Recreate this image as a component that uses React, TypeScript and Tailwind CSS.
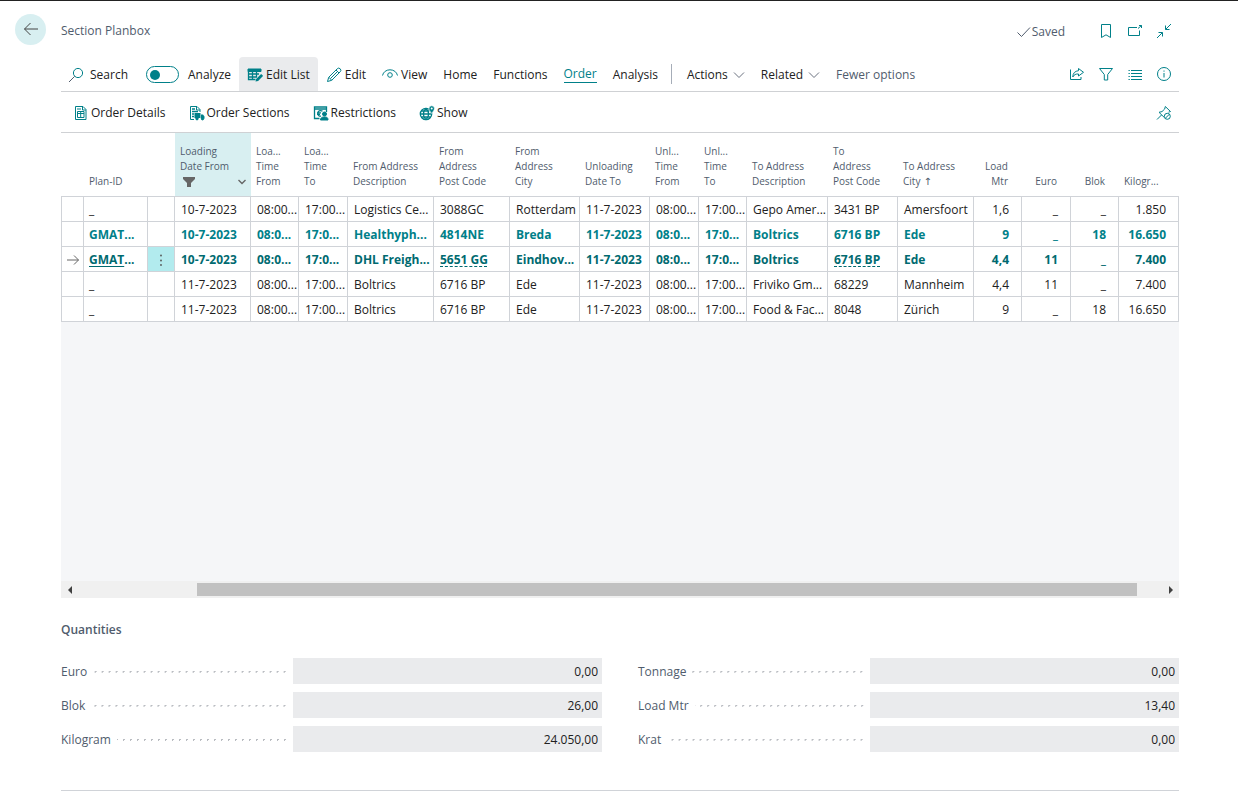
import type { ReactNode } from "react";

type IconProps = { children: ReactNode; className?: string };

function Icon({ children, className = "text-[#008089]" }: IconProps) {
	return (
		<svg
			viewBox="0 0 16 16"
			width="16"
			height="16"
			fill="none"
			stroke="currentColor"
			strokeWidth="1"
			aria-hidden="true"
			className={`shrink-0 ${className}`}
		>
			{children}
		</svg>
	);
}

const icons = {
	search: (
		<Icon>
			<circle cx="10" cy="6" r="4.6" />
			<path d="M6.7 9.3 1 15" stroke="#505c6d" />
		</Icon>
	),
	editList: (
		<Icon>
			<path d="M1 2h13v2.5H1z" fill="currentColor" />
			<path d="M1.5 4v8.5h7M1 7h11M1 10h9M5.5 4v8.5M9.5 4v6" strokeWidth="1.3" />
			<path d="m8.5 14.5.6-2.6 5-5 2 2-5 5z" fill="currentColor" stroke="none" />
		</Icon>
	),
	edit: (
		<Icon>
			<path d="M1.5 14.5 2.7 10.3 11.2 1.8a1.9 1.9 0 0 1 3 3L5.7 13.3zM10 3l3 3M3 10.3l2.7 3M4.5 11.5l7-7" />
		</Icon>
	),
	view: (
		<Icon>
			<path d="M.5 8.500C1.300 5 4.200 2.800 8 2.800S14.700 5 15.500 8.500" />
			<circle cx="8" cy="8" r="2.300" />
		</Icon>
	),
	share: (
		<Icon>
			<path d="M1.500 3.500v10h10.500v-2.500" />
			<path d="M9.500 2.500 14.500 6.300 9.500 10V8C6.800 7.800 5 8.700 3.800 11c0-3.800 2.200-6 5.700-6.300z" />
		</Icon>
	),
	filter: (
		<Icon>
			<path d="M1.500 2.500h13L9.700 8.500v5.500H6.300V8.500z" />
		</Icon>
	),
	list: (
		<Icon>
			<path d="M4 4.500h11M4 7.500h11M4 10.500h11M4 13.500h11M1.500 4.500h1.300M1.500 7.500h1.300M1.500 10.500h1.300M1.500 13.500h1.300" />
		</Icon>
	),
	info: (
		<Icon>
			<circle cx="8" cy="8" r="6.500" />
			<path d="M8 7v4.500M8 4.500v1.200" />
		</Icon>
	),
	pin: (
		<Icon>
			<path d="M9.300 1.500 14.500 6.500 12.500 7.200M9.300 1.500 8.700 4 6 6.600 3 7.300 8 12.200M5.500 10 1 14.500" />
			<circle cx="11.300" cy="11.300" r="3" />
			<path d="m9.300 13.300 4-4" />
		</Icon>
	),
	bookmark: (
		<Icon>
			<path d="M3.500 1.500h9v13L8 11.800 3.500 14.500z" />
		</Icon>
	),
	popout: (
		<Icon>
			<path d="M10 4.500H1.500v8h11V7.500M11 5.500l3.500-3M12 2.500h2.500V5" />
		</Icon>
	),
	collapse: (
		<Icon>
			<path d="M15 1 9.700 6.300M9.500 2.500v4h4M1 15l5.300-5.300M2.500 9.500h4v4" />
		</Icon>
	),
	orderDetails: (
		<Icon>
			<path d="M2.500 1.500h7.500l3 3v10H2.500zM9.500 1.500V5H13" />
			<path d="M4.500 6.500h6.500v6H4.500zM4.500 8.500h6.500M7.700 6.500v6M4 4h4" />
		</Icon>
	),
	orderSections: (
		<Icon>
			<path d="M5 14.500H1.500v-13H8l3 3V7M7.500 1.500V5H11" />
			<path d="M3 4h3M3 6.500h6M3 9h2M3 11.500h2" strokeWidth="1.300" />
			<path d="M5.500 8h6v5h-6zM12 9.500h2l1.500 2v2H12z" fill="currentColor" stroke="none" />
			<circle cx="8" cy="13.700" r="1.200" fill="currentColor" />
			<circle cx="13.500" cy="13.700" r="1.200" fill="currentColor" />
		</Icon>
	),
	restrictions: (
		<Icon>
			<path d="M6.500 13.500H1.500V2h12v5M1.500 4h12" strokeWidth="1.300" />
			<path d="M9.500 6.200C7 5 4.800 6 4.800 8.300s1.700 3.200 3.200 2.800M4 7.800h4M4 9.300h3" strokeWidth="1.300" />
			<circle cx="11.500" cy="9" r="2" fill="currentColor" />
			<path d="M7.500 15c.2-2.300 1.300-3 4-3s3.500.7 3.500 3z" fill="currentColor" />
		</Icon>
	),
	show: (
		<Icon>
			<circle cx="7" cy="9" r="5.700" strokeWidth="1.300" />
			<path d="M1.300 9h11.400M2.300 6h8M2.300 12h9.400M7 3.300c-3.500 3.400-3.500 8 0 11.400M7 3.300c3.500 3.400 3.500 8 0 11.400" strokeWidth="1.300" />
			<path d="M12.700 8.500c-1.700-2.500-2.700-3.500-2.700-5a2.700 2.700 0 0 1 5.400 0c0 1.500-1 2.500-2.700 5z" fill="currentColor" stroke="white" strokeWidth=".6" />
			<circle cx="12.700" cy="3.500" r="1" fill="white" stroke="none" />
		</Icon>
	),
	chevron: (
		<svg viewBox="0 0 12 12" width="12" height="12" fill="none" stroke="#6b7280" aria-hidden="true">
			<path d="m1 3.500 5 5 5-5" />
		</svg>
	),
};

const pageActions = [
	{ label: "Bookmark", icon: icons.bookmark },
	{ label: "Open in new window", icon: icons.popout },
	{ label: "Collapse", icon: icons.collapse },
];

const listActions = [
	{ label: "Share", icon: icons.share },
	{ label: "Filter", icon: icons.filter },
	{ label: "List layout", icon: icons.list },
	{ label: "Information", icon: icons.info },
];

const orderActions = [
	{ label: "Order Details", icon: icons.orderDetails },
	{ label: "Order Sections", icon: icons.orderSections },
	{ label: "Restrictions", icon: icons.restrictions },
	{ label: "Show", icon: icons.show },
];

const columns = [
	{ lines: [], width: "w-[23px]" },
	{ lines: ["Plan-ID"], width: "w-[64px]" },
	{ lines: [], width: "w-[27px]" },
	{ lines: ["Loading", "Date From"], width: "w-[76px]", filtered: true },
	{ lines: ["Loa...", "Time", "From"], width: "w-[48px]" },
	{ lines: ["Loa...", "Time", "To"], width: "w-[49px]" },
	{ lines: ["From Address", "Description"], width: "w-[86px]" },
	{ lines: ["From", "Address", "Post Code"], width: "w-[76px]" },
	{ lines: ["From", "Address", "City"], width: "w-[70px]" },
	{ lines: ["Unloading", "Date To"], width: "w-[70px]" },
	{ lines: ["Unl...", "Time", "From"], width: "w-[49px]" },
	{ lines: ["Unl...", "Time", "To"], width: "w-[48px]" },
	{ lines: ["To Address", "Description"], width: "w-[81px]" },
	{ lines: ["To", "Address", "Post Code"], width: "w-[70px]" },
	{ lines: ["To Address", "City"], width: "w-[76px]", sorted: true },
	{ lines: ["Load", "Mtr"], width: "w-[48px]", numeric: true },
	{ lines: ["Euro"], width: "w-[49px]", numeric: true },
	{ lines: ["Blok"], width: "w-[48px]", numeric: true },
	{ lines: ["Kilogr..."], width: "w-[60px]" },
];

const rows = [
	{
		id: 1,
		plan: "_",
		cells: ["10-7-2023", "08:00...", "17:00...", "Logistics Ce...", "3088GC", "Rotterdam", "11-7-2023", "08:00...", "17:00...", "Gepo Amer...", "3431 BP", "Amersfoort", "1,6", "_", "_", "1.850"],
	},
	{
		id: 2,
		plan: "GMAT...",
		planned: true,
		cells: ["10-7-2023", "08:0...", "17:0...", "Healthyph...", "4814NE", "Breda", "11-7-2023", "08:0...", "17:0...", "Boltrics", "6716 BP", "Ede", "9", "_", "18", "16.650"],
	},
	{
		id: 3,
		plan: "GMAT...",
		planned: true,
		selected: true,
		cells: ["10-7-2023", "08:0...", "17:0...", "DHL Freigh...", "5651 GG", "Eindhov...", "11-7-2023", "08:0...", "17:0...", "Boltrics", "6716 BP", "Ede", "4,4", "11", "_", "7.400"],
	},
	{
		id: 4,
		plan: "_",
		cells: ["11-7-2023", "08:00...", "17:00...", "Boltrics", "6716 BP", "Ede", "11-7-2023", "08:00...", "17:00...", "Friviko Gm...", "68229", "Mannheim", "4,4", "11", "_", "7.400"],
	},
	{
		id: 5,
		plan: "_",
		cells: ["11-7-2023", "08:00...", "17:00...", "Boltrics", "6716 BP", "Ede", "11-7-2023", "08:00...", "17:00...", "Food & Fac...", "8048", "Zürich", "9", "_", "18", "16.650"],
	},
];

const quantities = [
	{ id: "euro", label: "Euro", value: "0,00" },
	{ id: "tonnage", label: "Tonnage", value: "0,00" },
	{ id: "blok", label: "Blok", value: "26,00" },
	{ id: "load-mtr", label: "Load Mtr", value: "13,40" },
	{ id: "kilogram", label: "Kilogram", value: "24.050,00" },
	{ id: "krat", label: "Krat", value: "0,00" },
];

function IconButtons({ items }: { items: { label: string; icon: ReactNode }[] }) {
	return (
		<div className="flex pr-px">
			{items.map((item) => (
				<button key={item.label} type="button" aria-label={item.label} className="flex h-8 w-[29px] items-center justify-center">
					{item.icon}
				</button>
			))}
		</div>
	);
}

function Tab({ children, className = "" }: { children: ReactNode; className?: string }) {
	return (
		<button type="button" className={`flex h-full items-center gap-[3px] px-2 pt-px ${className}`}>
			{children}
		</button>
	);
}

function Toolbar() {
	return (
		<div className="flex h-[35px] items-center justify-between border-b border-[#cfd1d4]">
			<div className="flex h-full items-center whitespace-nowrap">
				<button type="button" className="flex h-full items-center gap-[6px] pl-[7px] pr-[18px] pt-px">
					{icons.search}
					Search
				</button>
				<label className="flex h-full items-center gap-[9px] pr-2 pt-px">
					<input type="checkbox" role="switch" className="sr-only" />
					<span className="flex h-[17px] w-[33px] items-center rounded-full border border-[#008089] px-[3px]">
						<span className="size-[10px] rounded-full bg-[#008089]" />
					</span>
					Analyze
				</label>
				<Tab className="rounded-t-sm bg-[#eaebed]">{icons.editList}Edit List</Tab>
				<Tab>{icons.edit}Edit</Tab>
				<Tab>{icons.view}View</Tab>
				<Tab>Home</Tab>
				<Tab>Functions</Tab>
				<Tab className="text-[#008089]">
					<span className="border-b border-[#008089] leading-4">Order</span>
				</Tab>
				<Tab>Analysis</Tab>
				<span className="ml-[5px] mr-[7px] h-5 w-px bg-[#a6adb8]" />
				<Tab className="gap-[5px]">Actions{icons.chevron}</Tab>
				<Tab className="gap-[5px]">Related{icons.chevron}</Tab>
				<Tab className="text-[#505c6d]">Fewer options</Tab>
			</div>
			<IconButtons items={listActions} />
		</div>
	);
}

function PlanTable() {
	return (
		<table className="w-full table-fixed border-separate border-spacing-0 whitespace-nowrap">
			<thead>
				<tr className="h-[64px] text-[10px] leading-[15px] text-[#505c6d]">
					{columns.map((col, i) => (
						<th
							key={i}
							scope="col"
							className={`border-b border-[#d0d3d8] pb-[7px] align-bottom font-normal ${col.width} ${
								col.numeric ? "pr-[14px] text-right" : "pl-[5px] text-left"
							} ${col.filtered ? "bg-[#d8eff1]" : ""}`}
						>
							{col.lines.map((line, n) => (
								<span key={n} className="block">
									{line}
									{col.sorted && n === 1 && <span className="font-['DejaVu_Sans',sans-serif]"> ↑</span>}
								</span>
							))}
							{col.filtered && (
								<span className="flex h-[15px] items-center justify-between pl-[3px] pr-1">
									<svg viewBox="0 0 12 10" width="12" height="10" fill="#666" aria-hidden="true">
										<path d="M0 0h12v2L8 6v4H4V6L0 2z" />
									</svg>
									<svg viewBox="0 0 10 10" width="10" height="10" fill="none" stroke="#666" strokeWidth="1.400" aria-hidden="true">
										<path d="m1.500 3 3.500 3.500L8.500 3" />
									</svg>
								</span>
							)}
						</th>
					))}
				</tr>
			</thead>
			<tbody>
				{rows.map((row) => (
					<tr
						key={row.id}
						className={`h-[25px] leading-4 [&>td]:border-b [&>td]:border-r [&>td]:border-[#d0d3d8] [&>td]:pt-px ${
							row.selected ? "font-bold text-[#006a70]" : row.planned ? "font-bold text-[#008089]" : ""
						}`}
					>
						<td className="border-l pl-[3px]">
							{row.selected && (
								<Icon className="text-[#666]">
									<path d="M2 8h11.500M9 3.500 13.500 8 9 12.500" />
								</Icon>
							)}
						</td>
						<td className="pl-[5px]">
							{row.selected ? (
								<a href="#plan">
									<span className="underline underline-offset-2">GMAT</span>...
								</a>
							) : (
								row.plan
							)}
						</td>
						<td className={row.selected ? "bg-[#b2ebee]" : ""}>
							{row.selected && (
								<button type="button" aria-label="Show more options" className="flex h-4 w-full items-center justify-center">
									<svg viewBox="0 0 2 12" width="2" height="12" fill="#555" aria-hidden="true">
										<circle cx="1" cy="1.500" r=".9" />
										<circle cx="1" cy="6.500" r=".9" />
										<circle cx="1" cy="11" r=".9" />
									</svg>
								</button>
							)}
						</td>
						{row.cells.map((cell, i) => (
							<td key={i} className={i > 11 ? "pr-3 text-right" : "pl-[6px]"}>
								{row.selected && (i === 4 || i === 10) ? (
									<span className="underline decoration-dashed underline-offset-2">{cell}</span>
								) : (
									cell
								)}
							</td>
						))}
					</tr>
				))}
			</tbody>
		</table>
	);
}

function Scrollbar() {
	return (
		<div className="flex h-[17px] items-center bg-[#f0f0f0]">
			<button type="button" aria-label="Scroll left" className="flex h-full w-[17px] items-center justify-center">
				<svg viewBox="0 0 4 8" width="4" height="8" fill="#404040" aria-hidden="true">
					<path d="M4 0v8L0 4z" />
				</svg>
			</button>
			<div className="flex h-[13px] flex-1">
				<div className="ml-[11%] w-[86.7%] bg-[#c1c1c1]" />
			</div>
			<button type="button" aria-label="Scroll right" className="flex h-full w-[17px] items-center justify-center">
				<svg viewBox="0 0 4 8" width="4" height="8" fill="#404040" aria-hidden="true">
					<path d="M0 0v8l4-4z" />
				</svg>
			</button>
		</div>
	);
}

function Quantities() {
	return (
		<section className="border-b border-[#d0d3d8] pb-[38px] pt-6">
			<h2 className="font-semibold leading-4 text-[#505c6d]">Quantities</h2>
			<div className="mt-5 grid grid-cols-2 gap-x-9 gap-y-2">
				{quantities.map((item) => (
					<div key={item.id} className="grid h-[26px] grid-cols-[3fr_4fr]">
						<div className="flex items-center pr-[5px] pt-px">
							<label htmlFor={item.id} className="text-[#505c6d]">
								{item.label}
							</label>
							<span className="ml-[6px] h-[3px] flex-1 bg-[radial-gradient(circle,#b9bcc1_1px,transparent_1px)] bg-[length:7px_3px] bg-right bg-repeat-x" />
						</div>
						<input id={item.id} readOnly value={item.value} className="min-w-0 bg-[#eaebed] pr-1 pt-px text-right outline-none" />
					</div>
				))}
			</div>
		</section>
	);
}

export default function App() {
	return (
		<div className="border-t border-[#222] bg-white font-['Open_Sans',sans-serif] text-[12px] text-[#212121]">
			<header className="flex h-14 items-center justify-between pl-[15px] pr-[59px]">
				<div className="flex items-center gap-[15px]">
					<button type="button" aria-label="Back" className="flex size-[31px] items-center justify-center rounded-full bg-[#d8eff1]">
						<Icon className="text-[#444]">
							<path d="M15 8H1.500M7.500 2l-6 6 6 6" />
						</Icon>
					</button>
					<h1 className="pt-1 text-[#505c6d]">Section Planbox</h1>
				</div>
				<div className="flex items-center gap-[26px] pt-[3px]">
					<span className="flex items-center pt-[2px] text-[#505c6d]">
						<Icon className="text-[#505c6d]">
							<path d="m1.500 8.500 4 4 8.500-9" />
						</Icon>
						Saved
					</span>
					<IconButtons items={pageActions} />
				</div>
			</header>
			<main className="pl-[61px] pr-[59px]">
				<Toolbar />
				<div className="flex h-[41px] items-center justify-between border-b border-[#cfd1d4] pt-px">
					<div className="flex items-center gap-[23px] pl-3">
						{orderActions.map((item) => (
							<button key={item.label} type="button" className="flex items-center gap-[2px]">
								{item.icon}
								{item.label}
							</button>
						))}
					</div>
					<IconButtons items={[{ label: "Unpin", icon: icons.pin }]} />
				</div>
				<div className="min-h-[448px] bg-[#f5f6f8]">
					<div className="bg-white">
						<PlanTable />
					</div>
				</div>
				<Scrollbar />
				<Quantities />
			</main>
		</div>
	);
}
